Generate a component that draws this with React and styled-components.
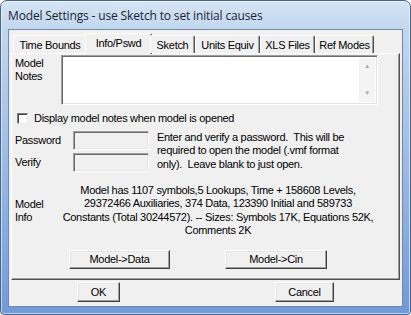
import styled, { createGlobalStyle } from 'styled-components';

const GlobalStyle = createGlobalStyle`
  html, body {
    margin: 0;
    padding: 0;
    background: #ffffff;
  }
  #root {
    width: 411px;
    height: 315px;
  }
`;

const Window = styled.div`
  box-sizing: border-box;
  width: 411px;
  height: 315px;
  display: flex;
  flex-direction: column;
  border: 1px solid #48648c;
  border-radius: 7px 7px 4px 4px;
  background: linear-gradient(180deg, #d6e4f5 0px, #c2d6ee 28px, #a3c0e6 140px, #6f9ad8 315px);
  box-shadow: inset 0 0 0 1px rgba(255, 255, 255, 0.55);
  font-family: 'Liberation Sans', Arial, sans-serif;
`;

const TitleBar = styled.div`
  height: 28px;
  display: flex;
  align-items: center;
  padding-left: 7px;
  font-family: 'Open Sans', 'Noto Sans', sans-serif;
  font-size: 12px;
  color: #1b2533;
  letter-spacing: -0.15px;
`;

const Client = styled.div`
  box-sizing: border-box;
  flex: 1;
  margin: 0 7px 7px 7px;
  background: #f0f0f0;
  border: 1px solid #6f89ad;
  display: flex;
  flex-direction: column;
  padding: 3px 2px 0 2px;
  font-size: 11px;
  letter-spacing: -0.3px;
  color: #000;
`;

const TabStrip = styled.div`
  display: flex;
  align-items: flex-end;
  height: 20px;
  padding-left: 2px;
  position: relative;
  z-index: 1;
`;

const Tab = styled.div`
  box-sizing: border-box;
  width: ${(p) => p.$w + (p.$active ? 4 : 0)}px;
  margin: 0 ${(p) => (p.$active ? -2 : 0)}px;
  height: ${(p) => (p.$active ? 21 : 18)}px;
  margin-bottom: ${(p) => (p.$active ? -1 : 0)}px;
  display: flex;
  align-items: center;
  justify-content: center;
  background: #f0f0f0;
  border-top: 1px solid #ffffff;
  border-left: 1px solid #ffffff;
  border-right: 1px solid #505050;
  box-shadow: inset -1px 0 0 #a0a0a0;
  border-radius: 2px 2px 0 0;
  padding-bottom: ${(p) => (p.$active ? 3 : 0)}px;
  white-space: nowrap;
`;

const Panel = styled.div`
  box-sizing: border-box;
  height: 227px;
  background: #f0f0f0;
  border-top: 1px solid #ffffff;
  border-left: 1px solid #ffffff;
  border-right: 1px solid #505050;
  border-bottom: 1px solid #505050;
  box-shadow: inset -1px -1px 0 #a0a0a0;
  padding: 1px 0 0 3px;
  display: flex;
  flex-direction: column;
`;

const Row = styled.div`
  display: flex;
  align-items: ${(p) => p.$align || 'flex-start'};
  margin-top: ${(p) => p.$mt || 0}px;
`;

const Label = styled.div`
  width: ${(p) => p.$w}px;
  line-height: 13px;
  padding-top: ${(p) => p.$pt || 0}px;
`;

const Sunken = styled.div`
  box-sizing: border-box;
  width: ${(p) => p.$w}px;
  height: ${(p) => p.$h}px;
  background: ${(p) => (p.$white ? '#ffffff' : '#f0f0f0')};
  border-top: 1px solid #a0a0a0;
  border-left: 1px solid #a0a0a0;
  border-right: 1px solid #ffffff;
  border-bottom: 1px solid #ffffff;
  box-shadow: inset 1px 1px 0 #696969, inset -1px -1px 0 #e3e3e3;
  display: flex;
  justify-content: flex-end;
`;

const ScrollTrack = styled.div`
  width: 16px;
  margin: 2px 2px 2px 0;
  background: #f4f4f4;
  display: flex;
  flex-direction: column;
  justify-content: space-between;
  align-items: center;
  padding: 5px 0 6px;
  color: #a8a8a8;
  font-size: 6px;
  line-height: 6px;
`;

const CheckBox = styled.div`
  box-sizing: border-box;
  width: 11px;
  height: 11px;
  margin: 0 6px 0 2px;
  background: #fff;
  border-top: 1px solid #808080;
  border-left: 1px solid #808080;
  border-right: 1px solid #e8e8e8;
  border-bottom: 1px solid #e8e8e8;
  box-shadow: inset 1px 1px 0 #404040;
`;

const FieldCol = styled.div`
  display: flex;
  flex-direction: column;
  gap: 3px;
`;

const FieldRow = styled.div`
  display: flex;
  align-items: center;
`;

const Para = styled.div`
  width: ${(p) => p.$w}px;
  line-height: 13.4px;
  text-align: ${(p) => p.$align || 'left'};
  margin-left: ${(p) => p.$ml || 0}px;
  white-space: ${(p) => (p.$nowrap ? 'nowrap' : 'normal')};
`;

const ButtonRow = styled.div`
  display: flex;
  padding-left: ${(p) => p.$pl}px;
  gap: ${(p) => p.$gap}px;
  margin-top: ${(p) => p.$mt}px;
`;

const Button = styled.div`
  box-sizing: border-box;
  width: ${(p) => p.$w}px;
  height: ${(p) => p.$h}px;
  display: flex;
  align-items: center;
  justify-content: center;
  background: #f0f0f0;
  border-top: 1px solid #ffffff;
  border-left: 1px solid #ffffff;
  border-right: 1px solid #404040;
  border-bottom: 1px solid #404040;
  box-shadow: inset -1px -1px 0 #a0a0a0, inset 1px 1px 0 #e3e3e3;
`;

const tabs = [
  ['Time Bounds', 74],
  ['Info/Pswd', 63],
  ['Sketch', 45],
  ['Units Equiv', 65],
  ['XLS Files', 55],
  ['Ref Modes', 59],
];

export default function App() {
  return (
    <>
      <GlobalStyle />
      <Window>
        <TitleBar>Model Settings - use Sketch to set initial causes</TitleBar>
        <Client>
          <TabStrip>
            {tabs.map(([name, w]) => (
              <Tab key={name} $w={w} $active={name === 'Info/Pswd'}>
                {name}
              </Tab>
            ))}
          </TabStrip>
          <Panel>
            <Row>
              <Label $w={46} $pt={2}>Model<br />Notes</Label>
              <Sunken $w={317} $h={50} $white>
                <ScrollTrack>
                  <span>▲</span>
                  <span>▼</span>
                </ScrollTrack>
              </Sunken>
            </Row>
            <Row $align="center" $mt={7}>
              <CheckBox />
              <span>Display model notes when model is opened</span>
            </Row>
            <Row $mt={7}>
              <FieldCol>
                <FieldRow>
                  <Label $w={58}>Password</Label>
                  <Sunken $w={76} $h={19} />
                </FieldRow>
                <FieldRow>
                  <Label $w={58}>Verify</Label>
                  <Sunken $w={76} $h={19} />
                </FieldRow>
              </FieldCol>
              <Para $w={205} $ml={8}>
                Enter and verify a password.&nbsp; This will be required to open the model (.vmf format only).&nbsp; Leave blank to just open.
              </Para>
            </Row>
            <Row $align="center" $mt={12}>
              <Label $w={42}>Model<br />Info</Label>
              <Para $w={322} $align="center" $nowrap>
                Model has 1107 symbols,5 Lookups, Time + 158608 Levels,<br />
                29372466 Auxiliaries, 374 Data, 123390 Initial and 589733<br />
                Constants (Total 30244572). -- Sizes: Symbols 17K, Equations 52K,<br />
                Comments 2K
              </Para>
            </Row>
            <ButtonRow $pl={54} $gap={55} $mt={12}>
              <Button $w={101} $h={19}>Model-&gt;Data</Button>
              <Button $w={102} $h={19}>Model-&gt;Cin</Button>
            </ButtonRow>
          </Panel>
          <ButtonRow $pl={66} $gap={155} $mt={2}>
            <Button $w={43} $h={20}>OK</Button>
            <Button $w={59} $h={20}>Cancel</Button>
          </ButtonRow>
        </Client>
      </Window>
    </>
  );
}
